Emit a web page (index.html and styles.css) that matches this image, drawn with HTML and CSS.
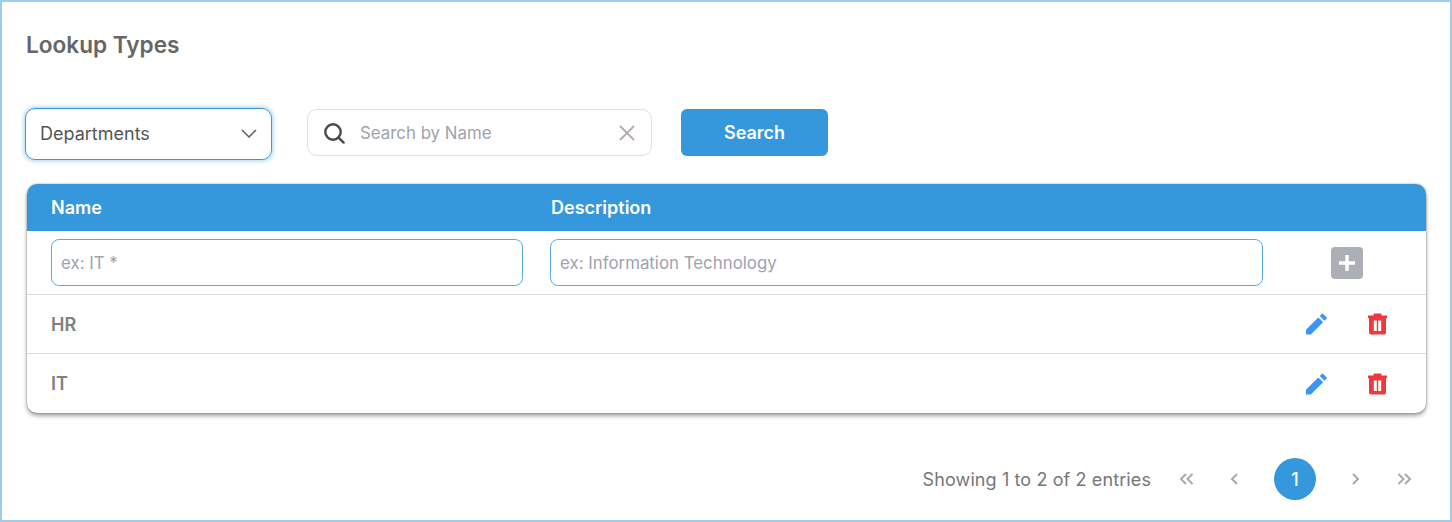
FILE: index.html
```html
<!DOCTYPE html>
<html lang="en">
<head>
<meta charset="utf-8">
<title>Lookup Types</title>
<link rel="stylesheet" href="styles.css">
</head>
<body>
<main class="frame">
  <h1 class="title">Lookup Types</h1>
  <div class="filters">
    <div class="select">
      <span>Departments</span>
      <svg class="chev" viewBox="0 0 16 10" width="16" height="10"><path d="M1 1l7 7 7-7" fill="none" stroke="#5f5a5a" stroke-width="1.5"/></svg>
    </div>
    <div class="search">
      <svg class="mag" viewBox="0 0 22 22" width="22" height="22"><circle cx="10" cy="10" r="7.7" fill="none" stroke="#4a4a4a" stroke-width="2.4"/><path d="M15.6 15.6l5 5" stroke="#4a4a4a" stroke-width="2.4" stroke-linecap="round"/></svg>
      <input class="search-input" placeholder="Search by Name">
      <svg class="clear" viewBox="0 0 16 16" width="16" height="16"><path d="M1 1l14 14M15 1L1 15" stroke="#b5abab" stroke-width="1.8"/></svg>
    </div>
    <button class="btn">Search</button>
  </div>
  <section class="table">
    <div class="row head">
      <div class="c-name">Name</div>
      <div class="c-desc head-desc">Description</div>
    </div>
    <div class="row add">
      <div class="c-name"><input class="field" placeholder="ex: IT *"></div>
      <div class="c-desc"><input class="field" placeholder="ex: Information Technology"></div>
      <div class="c-plus">
        <span class="plus"><svg viewBox="0 0 18 18" width="18" height="18"><path d="M9 1v16M1 9h16" stroke="#fff" stroke-width="3.4"/></svg></span>
      </div>
    </div>
    <div class="row item">
      <div class="c-name">HR</div>
      <div class="c-desc"></div>
      <div class="c-act">
        <svg viewBox="0 0 22 22" width="22" height="22"><path fill="#3b94f6" d="M1 21.500v-4.800L13.300 4.400l4.800 4.800L5.800 21.500zM14.700 3l2-2q.8-.8 1.600 0l3.200 3.200q.8.8 0 1.600l-2 2z"/></svg>
        <svg viewBox="0 0 19 22" width="19" height="22"><path fill="#ee3a3e" fill-rule="evenodd" d="M0 2.500h5.500V1.300q0-.8.8-.8h6.400q.8 0 .8.8v1.200H19v2.700H0zM1 5.200h17V19.500q0 2-2 2H3q-2 0-2-2zM5.800 7.500v10.500h3V7.500zM10.200 7.500v10.500h3V7.500z"/></svg>
      </div>
    </div>
    <div class="row item">
      <div class="c-name">IT</div>
      <div class="c-desc"></div>
      <div class="c-act">
        <svg viewBox="0 0 22 22" width="22" height="22"><path fill="#3b94f6" d="M1 21.500v-4.800L13.300 4.400l4.800 4.800L5.800 21.500zM14.700 3l2-2q.8-.8 1.600 0l3.200 3.200q.8.8 0 1.600l-2 2z"/></svg>
        <svg viewBox="0 0 19 22" width="19" height="22"><path fill="#ee3a3e" fill-rule="evenodd" d="M0 2.500h5.500V1.300q0-.8.8-.8h6.400q.8 0 .8.8v1.200H19v2.700H0zM1 5.200h17V19.500q0 2-2 2H3q-2 0-2-2zM5.800 7.500v10.500h3V7.500zM10.200 7.500v10.500h3V7.500z"/></svg>
      </div>
    </div>
  </section>
  <nav class="pager">
    <span class="info">Showing 1 to 2 of 2 entries</span>
    <svg class="pg first" viewBox="0 0 15 12" width="15" height="12"><path d="M7 1L2 6l5 5M13.500 1l-5 5 5 5" fill="none" stroke="#aaa" stroke-width="2"/></svg>
    <svg class="pg prev" viewBox="0 0 8 12" width="8" height="12"><path d="M7 1L2 6l5 5" fill="none" stroke="#aaa" stroke-width="2"/></svg>
    <span class="page">1</span>
    <svg class="pg next" viewBox="0 0 8 12" width="8" height="12"><path d="M1 1l5 5-5 5" fill="none" stroke="#aaa" stroke-width="2"/></svg>
    <svg class="pg last" viewBox="0 0 15 12" width="15" height="12"><path d="M1.500 1l5 5-5 5M8 1l5 5-5 5" fill="none" stroke="#aaa" stroke-width="2"/></svg>
  </nav>
</main>
</body>
</html>
```
FILE: styles.css
```css
* { box-sizing: border-box; }
html, body { margin: 0; padding: 0; background: #fff; }
body { font-family: Inter, "Liberation Sans", sans-serif; }
.frame {
  width: 1452px;
  height: 522px;
  border: 2px solid #9ccdee;
  padding: 31px 24px 0 25px;
  overflow: hidden;
}
.title {
  margin: 0 0 0 -1px;
  height: 24px;
  line-height: 24px;
  font-size: 22.600px;
  font-weight: 600;
  color: #666;
}
.filters {
  display: flex;
  align-items: flex-start;
  margin: 51px 0 0 -2px;
  height: 52px;
}
.select {
  width: 247px;
  height: 52px;
  border: 1px solid #3a98dc;
  border-radius: 10px;
  box-shadow: 0 0 4px 1px rgba(58, 152, 220, .45);
  display: flex;
  align-items: center;
  justify-content: space-between;
  padding: 0 14px 1px;
  font-size: 18px;
  color: #555;
}
.search {
  width: 345px;
  height: 47px;
  margin: 1px 0 0 35px;
  border: 1px solid #dfdfdf;
  border-radius: 10px;
  display: flex;
  align-items: center;
  padding: 0 16px 0 15px;
}
.mag { flex: none; margin-right: 15px; }
.search-input {
  flex: 1;
  min-width: 0;
  border: 0;
  outline: 0;
  padding: 0;
  font: 16.850px Inter, "Liberation Sans", sans-serif;
  color: #555;
}
.search-input::placeholder, .field::placeholder { color: #a0a3ae; opacity: 1; }
.clear { flex: none; }
.btn {
  width: 147px;
  height: 47px;
  margin: 1px 0 0 29px;
  border: 0;
  border-radius: 6px;
  background: #3598dc;
  color: #fff;
  font: 600 18px Inter, "Liberation Sans", sans-serif;
}
.table {
  margin-top: 24px;
  width: 1399px;
  border-radius: 10px;
  overflow: hidden;
  background: #fff;
  box-shadow: 0 0 2px rgba(0, 0, 0, .4), 0 3px 4px rgba(0, 0, 0, .35);
}
.row { display: flex; align-items: center; }
.c-name { width: 523px; padding-left: 24px; flex: none; }
.c-desc { width: 739px; flex: none; }
.head {
  height: 47px;
  background: #3598dc;
  color: #fff;
  font-size: 18px;
  font-weight: 600;
}
.head-desc { padding-left: 1px; }
.add { height: 64px; border-bottom: 1px solid #e2dcdc; }
.field {
  display: block;
  height: 47px;
  padding: 0 9px;
  border: 1px solid #5cabe3;
  border-radius: 8px;
  outline: 0;
  font: 16.850px Inter, "Liberation Sans", sans-serif;
  color: #555;
}
.c-name .field { width: 472px; }
.c-desc .field { width: 713px; }
.c-plus { flex: 1; display: flex; padding-left: 42px; }
.plus {
  width: 32px;
  height: 32px;
  border-radius: 4px;
  background: #acafb8;
  display: flex;
  align-items: center;
  justify-content: center;
}
.item { height: 58px; font-size: 18px; font-weight: 600; color: #808080; }
.item + .item { border-top: 1px solid #e2dcdc; height: 60px; }
.c-act { flex: 1; display: flex; align-items: center; padding-left: 16px; gap: 41px; }
.pager {
  display: flex;
  align-items: center;
  justify-content: flex-end;
  margin-top: 45px;
  height: 42px;
  padding-right: 14px;
  width: 1399px;
}
.info { font-size: 18px; letter-spacing: .11px; color: #777; margin-right: 28px; }
.pg { flex: none; }
.prev { margin-left: 36px; }
.page {
  width: 42px;
  height: 42px;
  margin-left: 36px;
  border-radius: 50%;
  background: #3598dc;
  color: #fff;
  font-size: 18px;
  font-weight: 500;
  display: flex;
  align-items: center;
  justify-content: center;
}
.next { margin-left: 36px; }
.last { margin-left: 37px; }
```
